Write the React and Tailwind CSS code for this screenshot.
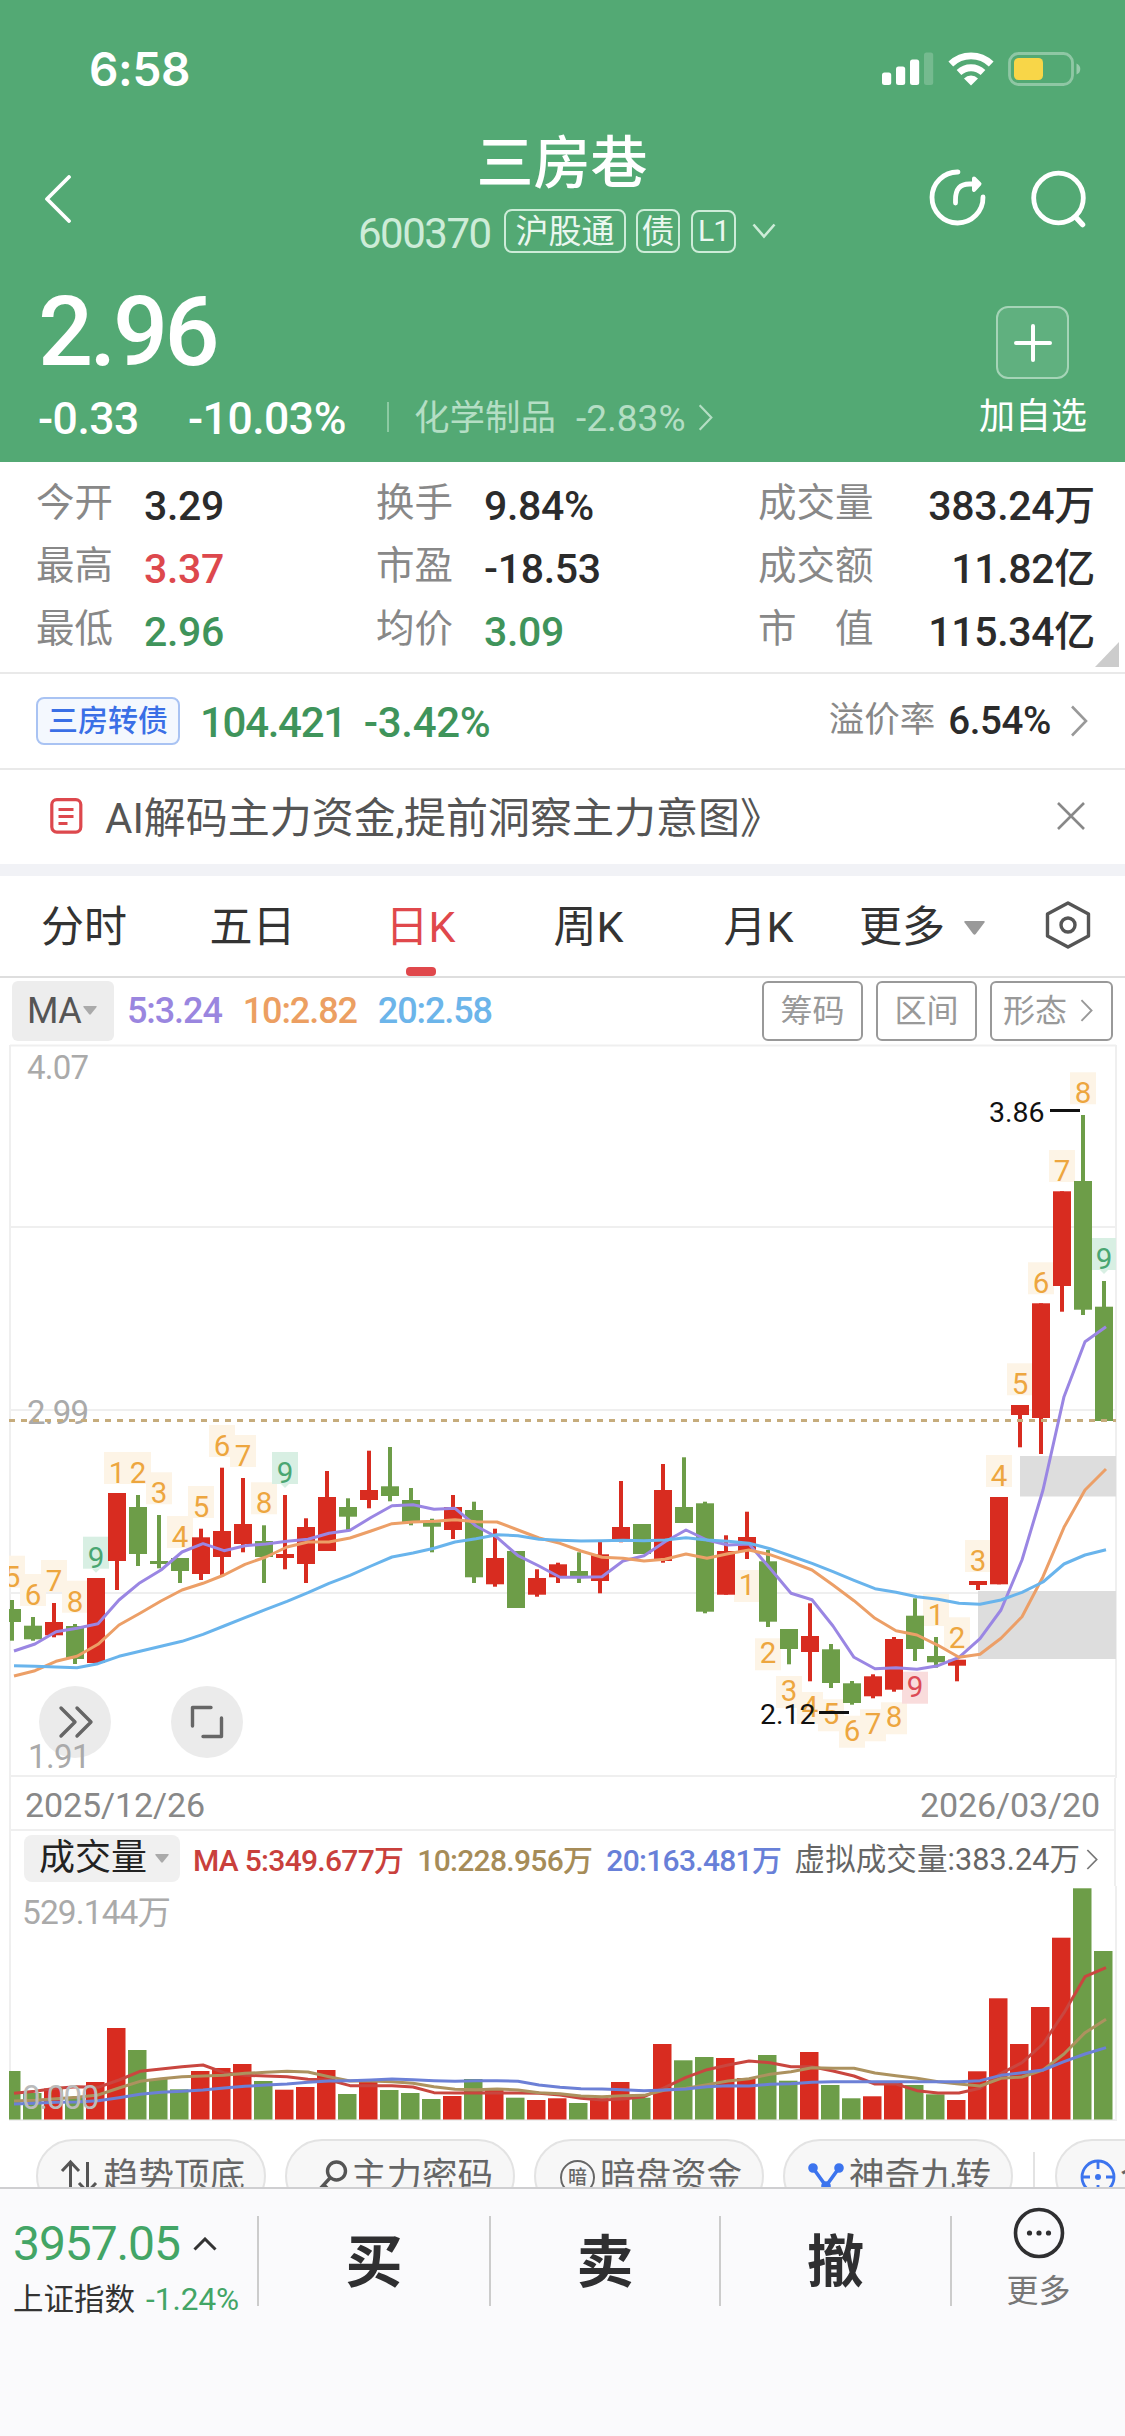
const UP = '#d82c20';
const DOWN = '#6d9d48';

// [direction, high, low, bodyTop, bodyBottom, volumeTop]
const CANDLES = [
  ['d', 1600, 1640.7, 1609, 1622, 2071],
  ['d', 1617, 1640.7, 1625.7, 1639.3, 2093],
  ['u', 1603, 1637.3, 1622, 1635.3, 2088.5],
  ['d', 1624, 1664, 1626, 1659, 2098],
  ['u', 1578, 1663, 1578, 1663, 2082],
  ['u', 1493, 1590, 1493, 1561, 2028],
  ['d', 1495, 1566, 1507, 1554, 2050],
  ['d', 1515, 1568.3, 1561, 1564, 2079],
  ['d', 1558, 1583, 1558, 1571, 2089.3],
  ['u', 1528.7, 1580, 1537.3, 1574, 2071],
  ['u', 1467.7, 1575, 1531, 1557, 2068],
  ['u', 1478, 1552.3, 1524, 1544, 2064],
  ['d', 1525.3, 1583, 1541, 1557, 2081],
  ['u', 1495, 1569.3, 1554, 1558, 2089.7],
  ['u', 1518.3, 1583, 1527, 1564, 2087],
  ['u', 1471, 1551, 1497, 1551, 2070],
  ['d', 1498.3, 1530, 1507, 1516.7, 2094],
  ['u', 1450.7, 1508.3, 1490, 1500, 2081],
  ['d', 1447, 1501.3, 1486.3, 1496, 2090],
  ['d', 1488, 1525.3, 1500, 1522.7, 2093],
  ['d', 1518.7, 1552.3, 1522.3, 1526.7, 2099],
  ['u', 1495, 1539, 1507, 1530, 2096],
  ['d', 1501.7, 1583, 1510, 1577.3, 2079],
  ['u', 1528.7, 1586.7, 1558, 1584.3, 2089.3],
  ['d', 1551, 1608, 1551, 1608, 2097.7],
  ['u', 1569.3, 1596.7, 1578, 1594.7, 2100],
  ['u', 1562.7, 1583, 1564.3, 1577.3, 2098.3],
  ['d', 1552.3, 1583, 1571, 1576.7, 2103],
  ['u', 1541.7, 1593.3, 1554.3, 1581, 2098.3],
  ['u', 1481, 1542.3, 1527, 1539, 2082],
  ['d', 1524, 1554, 1524, 1554, 2097.7],
  ['u', 1464, 1562.7, 1490, 1561, 2044],
  ['d', 1457.3, 1523, 1507, 1523, 2060.3],
  ['d', 1501.7, 1613.3, 1503.3, 1611.7, 2057],
  ['u', 1535.3, 1594.7, 1551, 1594.7, 2058],
  ['u', 1511.7, 1559, 1537, 1551, 2078],
  ['d', 1550, 1627, 1561.3, 1621.7, 2055],
  ['d', 1629, 1664.3, 1629, 1649, 2080.7],
  ['u', 1603.3, 1681.3, 1636, 1652, 2052],
  ['d', 1644, 1688, 1649.3, 1683, 2085],
  ['d', 1681, 1704.7, 1683.3, 1703, 2098.3],
  ['u', 1674.3, 1698.3, 1676.3, 1696.3, 2096.3],
  ['u', 1637, 1691.7, 1639, 1689.7, 2082],
  ['d', 1598.3, 1661, 1615.7, 1649, 2085],
  ['d', 1637, 1667.7, 1656, 1662.3, 2094.3],
  ['u', 1659.7, 1681.3, 1659.7, 1665.7, 2100],
  ['u', 1581, 1590, 1581, 1585, 2071.3],
  ['u', 1497, 1584.3, 1497, 1584.3, 1998.3],
  ['u', 1405, 1447.3, 1405, 1415, 2044],
  ['u', 1303.3, 1454, 1303.3, 1418, 2007],
  ['u', 1191.3, 1311.7, 1191.3, 1286, 1937.7],
  ['d', 1115, 1315, 1181, 1309.7, 1888.3],
  ['d', 1281, 1421, 1306.7, 1421, 1951],
];

const MA5 = [
  1651, 1644, 1631.7, 1628.3, 1623.7, 1600, 1582.7, 1570, 1552, 1543.7, 1550.7, 1545.7, 1544, 1541.3, 1539.3, 1533.3,
  1530.3, 1517.5, 1505.7, 1504.7, 1509.3, 1508.3, 1526, 1537.3, 1555.7, 1566, 1577.3, 1577.3, 1576.7, 1561, 1555.7,
  1541.7, 1530, 1540, 1545, 1544, 1568.3, 1593.3, 1599.7, 1626, 1657.3, 1668.7, 1667.7, 1669.3, 1665.7, 1657.3, 1638.7,
  1610, 1560, 1490, 1396.7, 1341.7, 1326.7,
];
const MA10 = [
  1676, 1670.7, 1661.3, 1656.3, 1644.3, 1625, 1613.3, 1601, 1590, 1583.3, 1575, 1564.3, 1557, 1547, 1542, 1542, 1538,
  1531, 1523.7, 1522, 1521.3, 1519.7, 1521.7, 1522, 1530, 1538, 1543.3, 1551, 1557.3, 1558.3, 1561, 1559.3, 1554,
  1558.3, 1553.7, 1550, 1554.7, 1562, 1570, 1585, 1600.7, 1618.3, 1630.7, 1635, 1645.3, 1657.3, 1654.3, 1638.3, 1616.7,
  1576.7, 1527.3, 1490, 1469,
];
const MA20 = [
  1665.7, 1666.3, 1667, 1667.7, 1663.7, 1656.3, 1651.3, 1646.3, 1641.3, 1634.3, 1626, 1617.7, 1609.3, 1601.3, 1592.7,
  1583.3, 1575.3, 1566, 1557, 1553, 1548.3, 1542, 1538.7, 1534.7, 1535.7, 1539.3, 1540.3, 1541, 1540.7, 1540.3, 1540.7,
  1540, 1537.7, 1540, 1541.3, 1543.3, 1548.7, 1556, 1563.3, 1571.7, 1580.3, 1588.7, 1592.3, 1596.7, 1599.3, 1603.3,
  1604.3, 1600, 1592.3, 1582, 1564, 1555, 1549.7,
];

const VOL5 = [
  640, 634, 625, 620, 622, 600, 574, 567, 560, 555, 578, 586, 588, 590, 598, 600, 617, 617, 617, 621, 638, 639, 638, 639,
  639, 640, 645, 655, 660, 657, 650, 622, 592, 569, 555, 543, 548, 560, 560, 573, 588, 612, 612, 632, 639, 639, 625, 580,
  548, 492, 398, 290, 263,
];
const VOL10 = [
  663, 661, 656, 652, 645, 624, 604, 596, 590, 588, 586, 580, 577, 574, 576, 590, 603, 603, 605, 610, 620, 628, 629, 627,
  630, 638, 641, 648, 650, 647, 646, 630, 625, 614, 603, 596, 583, 575, 563, 565, 565, 579, 587, 595, 605, 612, 618, 595,
  591, 570, 522, 458, 418,
];
const VOL20 = [
  672, 670, 667, 666, 662, 653, 643, 637, 634, 630, 624, 619, 615, 612, 607, 603, 602, 600, 597, 599, 602, 604, 602, 602,
  604, 615, 622, 626, 627, 629, 632, 630, 627, 620, 617, 618, 613, 611, 607, 605, 605, 605, 605, 605, 605, 605, 602, 586,
  578, 570, 545, 522, 503,
];

// [candle index, digit, baseline, tone, placed below the candle]
const COUNTS = [
  [0, 5, 1586.7], [1, 6, 1605], [2, 7, 1591], [3, 8, 1611.7], [4, 9, 1567.7, 'green'], [5, 1, 1483], [6, 2, 1483],
  [7, 3, 1503.3], [8, 4, 1547], [9, 5, 1517], [10, 6, 1456], [11, 7, 1466], [12, 8, 1513.3], [13, 9, 1483, 'green'],
  [35, 1, 1595, '', true], [36, 2, 1663.3, '', true], [37, 3, 1701, '', true], [38, 4, 1717, '', true],
  [39, 5, 1724.3, '', true], [40, 6, 1740.7, '', true], [41, 7, 1734.3, '', true], [42, 8, 1727.3, '', true],
  [43, 9, 1696.7, 'red', true], [44, 1, 1625], [45, 2, 1648.3], [46, 3, 1571], [47, 4, 1486], [48, 5, 1394.3],
  [49, 6, 1293.3], [50, 7, 1181], [51, 8, 1103.3], [52, 9, 1269, 'green'],
];

const TONES = {
  green: { bg: '#d8efe3', fg: '#4aa672' },
  red: { bg: '#f9dcdc', fg: '#dc4a55' },
  orange: { bg: '#fdf4e6', fg: '#eda63f' },
};

const centerX = (i) => 12 + i * 21;
const line = (values, toY = (v) => v) => values.map((v, i) => `${14 + i * 21},${toY(v)}`).join(' ');
const volY = (v) => 1880 + v / 3;

function Chevron({ className }) {
  return (
    <svg className={className} viewBox="0 0 18 32" fill="none" stroke="currentColor" strokeWidth="2.6" preserveAspectRatio="none">
      <path d="M2 1.5 16 16 2 30.5" />
    </svg>
  );
}

function Caret({ className }) {
  return (
    <svg className={className} viewBox="0 0 20 14" fill="currentColor" preserveAspectRatio="none">
      <path d="M1.5 0h17q2 0 1 1.6L11.2 13q-1.2 1.4-2.4 0L.5 1.6Q-.5 0 1.5 0Z" />
    </svg>
  );
}

function StatusBar() {
  return (
    <div className="flex h-[122px] items-center pt-4 pr-[42px] pl-[89px]">
      <span className="text-[46px] font-semibold tracking-[-0.3px] [font-family:Inter,sans-serif]">6:58</span>
      <div className="ml-auto flex items-center">
        <svg width="53" height="34" viewBox="0 0 53 34" fill="#fff">
          <rect x="0" y="20.500" width="9.200" height="12.500" rx="2.500" />
          <rect x="14" y="14.500" width="9.200" height="18.500" rx="2.500" />
          <rect x="28" y="7.500" width="9.200" height="25.500" rx="2.500" />
          <rect x="42" y="0.500" width="9.200" height="32.500" rx="2.500" opacity="0.2" />
        </svg>
        <svg className="ml-[13px]" width="46" height="34" viewBox="0 0 46 34" fill="none" stroke="#fff" strokeWidth="6.800">
          <path d="M2.800 12a29 29 0 0 1 40.400 0" />
          <path d="M11 20.500a17.500 17.500 0 0 1 24 0" />
          <path d="M16 26.500a9.800 9.800 0 0 1 14 0L23 33.500Z" fill="#fff" stroke="none" />
        </svg>
        <svg className="ml-[14px]" width="75" height="34" viewBox="0 0 75 34" fill="none">
          <rect x="1.500" y="1.500" width="63" height="31" rx="9" stroke="#fff" strokeWidth="2.800" opacity="0.35" />
          <rect x="6" y="6" width="29" height="22" rx="4.500" fill="#f8d648" />
          <path d="M68.500 11.500q3.800 1.500 3.800 5.500t-3.800 5.500Z" fill="#fff" opacity="0.4" />
        </svg>
      </div>
    </div>
  );
}

function Header() {
  return (
    <header className="h-[462px] bg-[#53a974] text-white">
      <StatusBar />
      <div className="grid h-[144px] grid-cols-[342px_440px_1fr]">
        <svg className="mt-[53px] ml-[44px]" width="28" height="48" viewBox="0 0 28 48" fill="none" stroke="#fff" strokeWidth="3.800" strokeLinecap="round" strokeLinejoin="round">
          <path d="M25 2 3 24l22 22" />
        </svg>
        <div className="flex flex-col items-center">
          <h1 className="mt-[13px] text-[57px] font-medium">三房巷</h1>
          <div className="mt-[17px] flex h-[44px] w-full items-center pl-[16px] whitespace-nowrap">
            <span className="w-[132px] pt-[5px] text-[42px] tracking-[-1.5px] text-[#cdecd8]">600370</span>
            <span className="ml-[14px] flex h-[44px] w-[122px] shrink-0 items-center justify-center rounded-lg border-2 border-[#cdecd8] text-[33px] text-[#eaf7ef]">沪股通</span>
            <span className="ml-[10px] flex h-[44px] w-[44px] shrink-0 items-center justify-center rounded-lg border-2 border-[#cdecd8] text-[33px] text-[#eaf7ef]">债</span>
            <span className="ml-[11px] flex h-[43px] w-[45px] shrink-0 items-center justify-center rounded-lg border-2 border-[#cdecd8] text-[30px] tracking-[-1px] text-[#eaf7ef]">L1</span>
            <svg className="ml-[16px]" width="24" height="16" viewBox="0 0 24 16" fill="none" stroke="#cdecd8" strokeWidth="2.600">
              <path d="m1.500 1.500 10.500 12 10.500-12" />
            </svg>
          </div>
        </div>
        <div className="flex pt-[46px]">
          <svg className="ml-[145px]" width="60" height="60" viewBox="0 0 60 60" fill="none" stroke="#fff" strokeWidth="4.800" strokeLinecap="round" strokeLinejoin="round">
            <path d="M31 4A25.500 25.500 0 1 0 56 29" />
            <path d="M28.500 35v-3c0-11 4.500-16 14-16h8" />
            <path d="m47 10.500 5.500 5.500-5.500 6Z" fill="#fff" strokeWidth="4" />
          </svg>
          <svg className="ml-[42px]" width="62" height="62" viewBox="0 0 62 62" fill="none" stroke="#fff" strokeWidth="4.800" strokeLinecap="round">
            <circle cx="29.500" cy="30" r="24.800" />
            <path d="m47.500 50 6 6.500" strokeWidth="5.500" />
          </svg>
        </div>
      </div>
      <div className="flex justify-between pr-[38px] pl-[38px]">
        <div>
          <div className="mt-[18px] text-[97px] font-medium tracking-[-3.6px]">2.96</div>
          <div className="mt-[13px] flex h-[46px] items-center whitespace-nowrap">
            <span className="w-[150px] pt-[5px] text-[44.500px] font-medium tracking-[-0.5px]">-0.33</span>
            <span className="w-[199px] pt-[5px] text-[44.500px] font-medium tracking-[-0.5px]">-10.03%</span>
            <span className="h-[30px] w-[2px] bg-[#8ccaa3]" />
            <span className="ml-[25px] pt-[3px] text-[35.500px] text-[#b4dec4]">化学制品</span>
            <span className="ml-[20px] pt-[2px] text-[37px] text-[#b4dec4]">-2.83%</span>
            <Chevron className="ml-[13px] h-[27px] w-[15px] text-[#b4dec4]" />
          </div>
        </div>
        <div className="flex flex-col items-center">
          <div className="mt-[40px] flex h-[73px] w-[73px] items-center justify-center rounded-xl border-2 border-[#a5d4b7] bg-[#60b07f]">
            <svg width="38" height="38" viewBox="0 0 38 38" stroke="#fff" strokeWidth="4" strokeLinecap="round">
              <path d="M19 2v34M2 19h34" />
            </svg>
          </div>
          <span className="mt-[20px] text-[36px]">加自选</span>
        </div>
      </div>
    </header>
  );
}

const STATS = [
  ['今开', '3.29', 'text-[#2b2b2b]', '换手', '9.84%', 'text-[#2b2b2b]', '成交量', '383.24万'],
  ['最高', '3.37', 'text-[#dd484d]', '市盈', '-18.53', 'text-[#2b2b2b]', '成交额', '11.82亿'],
  ['最低', '2.96', 'text-[#3f945b]', '均价', '3.09', 'text-[#3f945b]', '市　值', '115.34亿'],
];

function Stats() {
  return (
    <section className="relative h-[212px] border-b-2 border-[#e9e9e9] pt-[11px]">
      {STATS.map(([l1, v1, c1, l2, v2, c2, l3, v3]) => (
        <div key={l1} className="grid h-[63px] grid-cols-[108px_232px_108px_274px_130px_1fr] items-center pr-[30px] pl-[36px] whitespace-nowrap">
          <span className="pb-[2px] text-[38.500px] text-[#888]">{l1}</span>
          <span className={`pt-[4px] text-[41px] font-medium tracking-[-0.3px] ${c1}`}>{v1}</span>
          <span className="pb-[2px] text-[38.500px] text-[#888]">{l2}</span>
          <span className={`pt-[4px] text-[41px] font-medium tracking-[-0.3px] ${c2}`}>{v2}</span>
          <span className="pb-[2px] text-[38.500px] text-[#888]">{l3}</span>
          <span className="pt-[3px] text-right text-[41px] font-medium tracking-[-0.3px] text-[#2b2b2b]">{v3}</span>
        </div>
      ))}
      <svg className="absolute right-[6px] bottom-[5px]" width="24" height="25" viewBox="0 0 24 25" fill="#ccc">
        <path d="M24 0v25H0Z" />
      </svg>
    </section>
  );
}

function BondRow() {
  return (
    <section className="flex h-[96px] items-center border-b-2 border-[#e9e9e9] pr-[37px] pl-[36px] whitespace-nowrap">
      <span className="flex h-[48px] w-[144px] items-center justify-center rounded-lg border-2 border-[#a9c3f3] bg-[#f4f8fe] text-[30px] font-medium text-[#3a6fe6]">三房转债</span>
      <span className="ml-[20px] pt-[4px] text-[42px] font-medium tracking-[-1.3px] text-[#3f945b]">104.421</span>
      <span className="ml-[18px] pt-[4px] text-[42px] font-medium tracking-[-0.3px] text-[#3f945b]">-3.42%</span>
      <span className="ml-auto text-[35.500px] text-[#888]">溢价率</span>
      <span className="ml-[13px] text-[38.500px] font-medium tracking-[-0.4px] text-[#2b2b2b]">6.54%</span>
      <Chevron className="ml-[19px] h-[32px] w-[18px] text-[#999]" />
    </section>
  );
}

function Notice() {
  return (
    <section className="flex h-[94px] items-center pr-[40px] pb-[2px] pl-[50px] whitespace-nowrap">
      <svg width="33" height="36" viewBox="0 0 33 36" fill="none" stroke="#dd484d" strokeWidth="3.200">
        <rect x="1.800" y="1.600" width="29" height="32.500" rx="5" />
        <path d="M8.500 11.500h15M8.500 18.500h15M8.500 25.500h9" />
      </svg>
      <span className="ml-[22px] pt-[5px] text-[42px] text-[#555]">AI解码主力资金,提前洞察主力意图》</span>
      <svg className="ml-auto" width="28" height="28" viewBox="0 0 28 28" stroke="#888" strokeWidth="2.600">
        <path d="M1 1l26 26M27 1 1 27" />
      </svg>
    </section>
  );
}

function Tabs() {
  return (
    <nav className="grid h-[102px] grid-cols-[168px_169px_167px_169px_171px_1fr] border-t border-b-2 border-t-white border-b-[#dedede] text-[43px] whitespace-nowrap text-[#333]">
      <span className="pt-[29px] text-center">分时</span>
      <span className="pt-[29px] text-center">五日</span>
      <span className="flex flex-col items-center pt-[29px] text-[#e0484c]">
        日K
        <i className="mt-auto h-[9px] w-[30px] rounded-[4px] bg-[#e0484c]" />
      </span>
      <span className="pt-[29px] text-center">周K</span>
      <span className="pt-[29px] text-center">月K</span>
      <span className="flex pt-[29px] pl-[15px]">
        更多
        <Caret className="mt-[15px] ml-[19px] h-[14px] w-[21px] text-[#999]" />
        <svg className="-mt-[5px] ml-[60px]" width="46" height="48" viewBox="0 0 46 48" fill="none" stroke="#555" strokeWidth="3.400" strokeLinejoin="round">
          <path d="M23 2 43.500 13v22L23 46 2.500 35V13Z" />
          <circle cx="23" cy="24" r="7" />
        </svg>
      </span>
    </nav>
  );
}

function MaBar() {
  return (
    <div className="flex h-[65px] items-center pr-[12px] pl-[12px] text-[36px] font-medium tracking-[-1.1px] whitespace-nowrap">
      <span className="flex h-[60px] w-[102px] items-center rounded-md bg-[#ededed] pl-[15px] font-normal tracking-[-0.5px] text-[#555]">
        MA
        <Caret className="ml-[2px] h-[9px] w-[14px] text-[#aaa]" />
      </span>
      <span className="ml-[13px] text-[#9a86df]">5:3.24</span>
      <span className="ml-[21px] text-[#ec9f62]">10:2.82</span>
      <span className="ml-[21px] text-[#6cb5ea]">20:2.58</span>
      <span className="ml-auto flex gap-[13px] text-[32px] font-normal tracking-normal text-[#999]">
        <span className="flex h-[60px] w-[101px] items-center justify-center rounded-md border-2 border-[#999]">筹码</span>
        <span className="flex h-[60px] w-[101px] items-center justify-center rounded-md border-2 border-[#999]">区间</span>
        <span className="flex h-[60px] w-[123px] items-center justify-center rounded-md border-2 border-[#999] pr-[7px]">
          形态
          <Chevron className="ml-[13px] h-[23px] w-[13px]" />
        </span>
      </span>
    </div>
  );
}

function CountTag({ index, digit, baseline, tone, below }) {
  const { bg, fg } = TONES[tone || 'orange'];
  const x = centerX(index);
  const top = below ? baseline - 25 : baseline - 31;
  return (
    <g>
      <rect x={x - 13} y={top} width="26" height="32" fill={bg} />
      {tone === 'green' && <path d={`M${x - 4} ${top + 32}h8l-4 4Z`} fill={bg} />}
      <text x={x} y={baseline} fill={fg} fontSize="29.500" textAnchor="middle">
        {digit}
      </text>
    </g>
  );
}

function KLineChart() {
  return (
    <svg className="block" width="1125" height="735" viewBox="0 1043 1125 735">
      <defs>
        <clipPath id="plot">
          <rect x="9" y="1043" width="1107" height="735" />
        </clipPath>
      </defs>
      <g stroke="#efefef" strokeWidth="2">
        <path d="M10 1045.500H1116M10 1227H1116M10 1410H1116M10 1593H1116M10 1776H1116" />
        <path d="M10 1045V1778M1116 1045V1778" />
      </g>
      <rect x="1020" y="1456" width="96" height="40.500" fill="#ddd" />
      <rect x="978" y="1591" width="138" height="68" fill="#ddd" />
      <g fill="#aaa" fontSize="33" letterSpacing="-0.800">
        <text x="27" y="1079">4.07</text>
        <text x="27" y="1424">2.99</text>
      </g>
      <g clipPath="url(#plot)">
        {COUNTS.map(([index, digit, baseline, tone, below]) => (
          <CountTag key={index} index={index} digit={digit} baseline={baseline} tone={tone} below={below} />
        ))}
        {CANDLES.map(([dir, high, low, top, bottom], i) => (
          <g key={i} fill={dir === 'u' ? UP : DOWN}>
            <rect x={centerX(i) - 2} y={high} width="4" height={low - high} />
            <rect x={centerX(i) - 9} y={top} width="18" height={bottom - top} />
          </g>
        ))}
        <path d="M9 1420.500H1116" stroke="#c6ac7c" strokeWidth="3" strokeDasharray="6 6" />
        <g fill="none" strokeWidth="3" strokeLinejoin="round">
          <polyline points={line(MA5)} stroke="#9a86e3" />
          <polyline points={line(MA10)} stroke="#ec9f67" />
          <polyline points={line(MA20)} stroke="#69b4ec" />
        </g>
      </g>
      <g fill="#111" fontSize="28.500">
        <text x="989" y="1121.500">3.86</text>
        <rect x="1050" y="1109" width="30" height="3" />
        <text x="760" y="1724">2.12</text>
        <rect x="819" y="1711" width="30" height="3" />
      </g>
      <g fill="none" stroke="#666" strokeWidth="3.400" strokeLinecap="round" strokeLinejoin="round">
        <circle cx="75" cy="1722" r="36" fill="#ebebeb" stroke="none" />
        <path d="m61 1708 14 14-14 14M77 1708l14 14-14 14" />
        <circle cx="207" cy="1722" r="36" fill="#ebebeb" stroke="none" />
        <path d="M211 1707.500h-18.500V1726M221.500 1718v18.500H203" />
      </g>
      <text x="28" y="1768" fill="#aaa" fontSize="33" letterSpacing="-0.600">1.91</text>
    </svg>
  );
}

function VolumeChart() {
  return (
    <svg className="block" width="1125" height="236" viewBox="0 1886 1125 236">
      <path d="M10 1886V2120H1116V1886" fill="none" stroke="#efefef" strokeWidth="2" />
      <text x="22" y="1924" fill="#aaa" fontSize="33.500" letterSpacing="-0.900">529.144万</text>
      <clipPath id="volume">
        <rect x="9" y="1886" width="1107" height="236" />
      </clipPath>
      <g clipPath="url(#volume)">
        {CANDLES.map(([dir, , , , , top], i) => (
          <rect key={i} x={centerX(i) - 10} y={top} width="18.500" height={2119.5 - top} fill={dir === 'u' ? UP : DOWN} />
        ))}
      </g>
      <g fill="none" strokeWidth="3" strokeLinejoin="round">
        <polyline points={line(VOL5, volY)} stroke="#c9463f" />
        <polyline points={line(VOL10, volY)} stroke="#ac925f" />
        <polyline points={line(VOL20, volY)} stroke="#6c80d6" />
      </g>
      <text x="22" y="2109" fill="#bbb" fontSize="33" letterSpacing="-1.400">0.000</text>
    </svg>
  );
}

function VolumeBar() {
  return (
    <div className="mx-[9px] flex h-[56px] items-center border-x-2 border-[#efefef] pr-[16px] pl-[13px] text-[30px] font-medium tracking-[-0.7px] whitespace-nowrap">
      <span className="flex h-[47px] w-[156px] shrink-0 items-center rounded-lg bg-[#f0f0f0] pl-[15px] text-[36px] font-normal tracking-normal text-[#222]">
        成交量
        <Caret className="ml-[8px] h-[9px] w-[14px] text-[#aaa]" />
      </span>
      <span className="ml-[13px] pt-[6px] text-[#c9403c]">MA 5:349.677万</span>
      <span className="ml-[14px] pt-[6px] text-[#a68c58]">10:228.956万</span>
      <span className="ml-[14px] pt-[6px] text-[#6880d8]">20:163.481万</span>
      <span className="ml-auto pt-[5px] text-[30.500px] font-normal tracking-[0.1px] text-[#666]">虚拟成交量:383.24万</span>
      <Chevron className="mt-[2px] ml-[6px] h-[21px] w-[12px] shrink-0 text-[#777]" />
    </div>
  );
}

const PILL = 'flex h-[74px] w-[230px] shrink-0 items-center rounded-full border-2 border-[#e3e3e3] bg-[#f7f7f7] pt-[2px] whitespace-nowrap';

function Indicators() {
  return (
    <div className="flex h-[65px] overflow-hidden pt-[17px] pl-[36px] text-[35.500px] text-[#666]">
      <div className={`${PILL} pl-[22px]`}>
        <svg width="40" height="36" viewBox="0 0 40 36" fill="none" stroke="#555" strokeWidth="3">
          <path d="M10.500 33V3M2 12l8.500-9 8.500 9M27.500 3v30M19 24l8.500 9 8.500-9" />
        </svg>
        <span className="ml-[3px]">趋势顶底</span>
      </div>
      <div className={`${PILL} ml-[19px] pl-[28px]`}>
        <svg width="34" height="36" viewBox="0 0 34 36" fill="none" stroke="#555" strokeWidth="3.400" strokeLinecap="round">
          <circle cx="21.500" cy="12" r="9" />
          <path d="M15 19 3 32M9 26l5 5" />
        </svg>
        <span className="ml-[2px]">主力密码</span>
      </div>
      <div className={`${PILL} ml-[19px] pl-[24px]`}>
        <span className="flex h-[35px] w-[35px] items-center justify-center rounded-full border-2 border-[#666] text-[19px] font-medium">暗</span>
        <span className="ml-[5px]">暗盘资金</span>
      </div>
      <div className={`${PILL} ml-[19px] pl-[23px]`}>
        <svg width="36" height="36" viewBox="0 0 36 36" fill="#3c74ee" stroke="#3c74ee" strokeWidth="3.600">
          <path d="m5 9 13 18L31 9" fill="none" />
          <circle cx="5" cy="9" r="3" />
          <circle cx="31" cy="9" r="3" />
          <circle cx="18" cy="27" r="3" />
        </svg>
        <span className="ml-[5px]">神奇九转</span>
      </div>
      <span className="mt-[13px] ml-[20px] h-[48px] w-[2px] shrink-0 bg-[#e3e3e3]" />
      <div className={`${PILL} ml-[20px] pl-[23px]`}>
        <svg width="36" height="36" viewBox="0 0 36 36" fill="none" stroke="#3c74ee" strokeWidth="2.800">
          <circle cx="18" cy="18" r="16" />
          <path d="M18 2v8M18 26v8M2 18h8M26 18h8" />
          <circle cx="18" cy="18" r="3" fill="#3c74ee" stroke="none" />
        </svg>
        <span className="ml-[4px]">个股诊断</span>
      </div>
    </div>
  );
}

function BottomBar() {
  return (
    <footer className="h-[249px] border-t-2 border-[#cfcfd1] bg-[#fafafc]">
      <div className="grid grid-cols-[259px_232px_230px_231px_1fr] pt-[27px] whitespace-nowrap">
        <div className="h-[90px] border-r-2 border-[#ccc] pl-[13px]">
          <div className="mt-[4px] flex items-center text-[48px] tracking-[-1.1px] text-[#43a566]">
            3957.05
            <svg className="ml-[13px]" width="24" height="14" viewBox="0 0 24 14" fill="none" stroke="#333" strokeWidth="3">
              <path d="M1.500 12.500 12 2l10.500 10.500" />
            </svg>
          </div>
          <div className="mt-[16px] flex items-center text-[30.500px] text-[#333]">
            上证指数
            <span className="ml-[11px] text-[31.500px] text-[#43a566]">-1.24%</span>
          </div>
        </div>
        {['买', '卖', '撤'].map((label) => (
          <div key={label} className="flex h-[90px] items-center justify-center border-r-2 border-[#ccc] pt-[2px] text-[57px] font-bold text-[#2f2f31]">
            {label}
          </div>
        ))}
        <div className="-mt-[9px] flex flex-col items-center text-[32px] text-[#777]">
          <svg width="52" height="52" viewBox="0 0 52 52" fill="none" stroke="#2f2f31" strokeWidth="3.600">
            <circle cx="26" cy="26" r="23.500" />
            <g fill="#2f2f31" stroke="none">
              <circle cx="16.500" cy="26" r="2.600" />
              <circle cx="26" cy="26" r="2.600" />
              <circle cx="35.500" cy="26" r="2.600" />
            </g>
          </svg>
          <span className="mt-[16px]">更多</span>
        </div>
      </div>
    </footer>
  );
}

export default function App() {
  return (
    <div className="h-[2436px] w-[1125px] overflow-hidden bg-white leading-none [font-family:Roboto,'Noto_Sans_CJK_SC',sans-serif]">
      <Header />
      <Stats />
      <BondRow />
      <Notice />
      <div className="h-[12px] bg-[#f1f2f6]" />
      <Tabs />
      <MaBar />
      <KLineChart />
      <div className="mx-[9px] flex h-[53px] items-center justify-between border-x-2 border-b-2 border-[#efefef] px-[14px] pt-[3px] text-[34px] tracking-[-0.1px] text-[#888]">
        <span>2025/12/26</span>
        <span>2026/03/20</span>
      </div>
      <div className="-mt-px">
        <VolumeBar />
      </div>
      <VolumeChart />
      <Indicators />
      <BottomBar />
    </div>
  );
}
